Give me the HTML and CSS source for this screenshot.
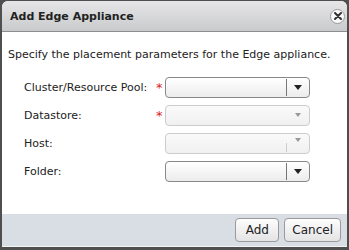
FILE: index.html
```html
<!doctype html>
<html>
<head>
<meta charset="utf-8">
<title>Add Edge Appliance</title>
<link rel="stylesheet" href="styles.css">
</head>
<body>
<div class="dlg">
	<div class="dlg-head">
		<span class="dlg-title">Add Edge Appliance</span>
		<span class="dlg-close">
			<svg width="8" height="8" viewBox="0 0 8 8"><path d="M1 1L7 7M7 1L1 7" stroke="#333" stroke-width="2" stroke-linecap="round"/></svg>
		</span>
	</div>
	<div class="dlg-body">
		<p class="intro">Specify the placement parameters for the Edge appliance.</p>
		<div class="rows">
			<label>Cluster/Resource Pool:</label><span class="req">*</span>
			<div class="sel"><span class="sel-btn"><i class="arr"></i></span></div>

			<label>Datastore:</label><span class="req">*</span>
			<div class="sel off"><span class="sel-btn"><i class="arr"></i></span></div>

			<label>Host:</label><span class="req"></span>
			<div class="sel off part"><span class="sel-btn"><i class="arr"></i></span></div>

			<label>Folder:</label><span class="req"></span>
			<div class="sel"><span class="sel-btn"><i class="arr"></i></span></div>
		</div>
	</div>
	<div class="dlg-foot">
		<button class="btn btn-add">Add</button>
		<button class="btn">Cancel</button>
	</div>
</div>
</body>
</html>
```
FILE: styles.css
```css
*{ margin:0; padding:0; box-sizing:border-box; }
html,body{ width:349px; height:250px; overflow:hidden; }
body{ background:#4f4f4f; font-family:"DejaVu Sans", Verdana, sans-serif; font-size:11px; color:#222; }
.dlg{ display:flex; flex-direction:column; margin:1px 2px 0 2px; height:246px; background:#fff; border-radius:6px 6px 0 0; overflow:hidden; }
.dlg-head{ height:31px; display:flex; align-items:center; justify-content:space-between; padding:0 2px 0 8px; background:linear-gradient(#e6e6e8,#c9cacc); border-bottom:1px solid #8e8e8e; }
.dlg-title{ font-weight:bold; font-size:11px; color:#222; }
.dlg-close{ width:15px; height:15px; border-radius:50%; background:#fafafa; border:1px solid #999; display:flex; align-items:center; justify-content:center; }
.dlg-body{ flex:1; padding:16px 6px 0 6px; }
.intro{ line-height:14px; white-space:nowrap; }
.rows{ display:grid; grid-template-columns:132px 9px 145px; grid-auto-rows:28px; align-items:center; margin:11px 0 0 16px; white-space:nowrap; }
.req{ color:#d22; font-size:13px; line-height:12px; padding-top:2px; }
.sel{ height:21px; border:1px solid #888; border-radius:4px; background:linear-gradient(#fff,#ececec); display:flex; justify-content:flex-end; }
.sel-btn{ width:23px; margin:1px 0; border-left:1px solid #777; display:flex; align-items:center; justify-content:center; }
.arr{ width:0; height:0; border-left:4px solid transparent; border-right:4px solid transparent; border-top:5px solid #222; }
.sel.off{ border-color:#ccc; background:linear-gradient(#fafafa,#f0f0f0); }
.sel.off .sel-btn{ border-left-color:transparent; }
.sel.off .arr{ border-top-color:#999; border-left-width:3px; border-right-width:3px; border-top-width:4px; }
.sel.part .sel-btn{ border-left:0; position:relative; align-items:flex-start; padding-top:3px; }
.sel.part .sel-btn::before{ content:""; position:absolute; left:0; bottom:0; height:9px; border-left:1px solid #ccc; }
.dlg-foot{ height:33px; background:#d9dde4; display:flex; justify-content:flex-end; align-items:center; gap:5px; padding:0 6px 0 0; border-bottom:1px solid #f4f4f4; }
.btn{ height:24px; border:1px solid #9a9a9a; border-radius:4px; background:linear-gradient(#fdfdfd,#e4e4e4); font-family:"DejaVu Sans", Verdana, sans-serif; font-size:12px; color:#222; padding:0 7px; }
.btn-add{ width:44px; }
```
